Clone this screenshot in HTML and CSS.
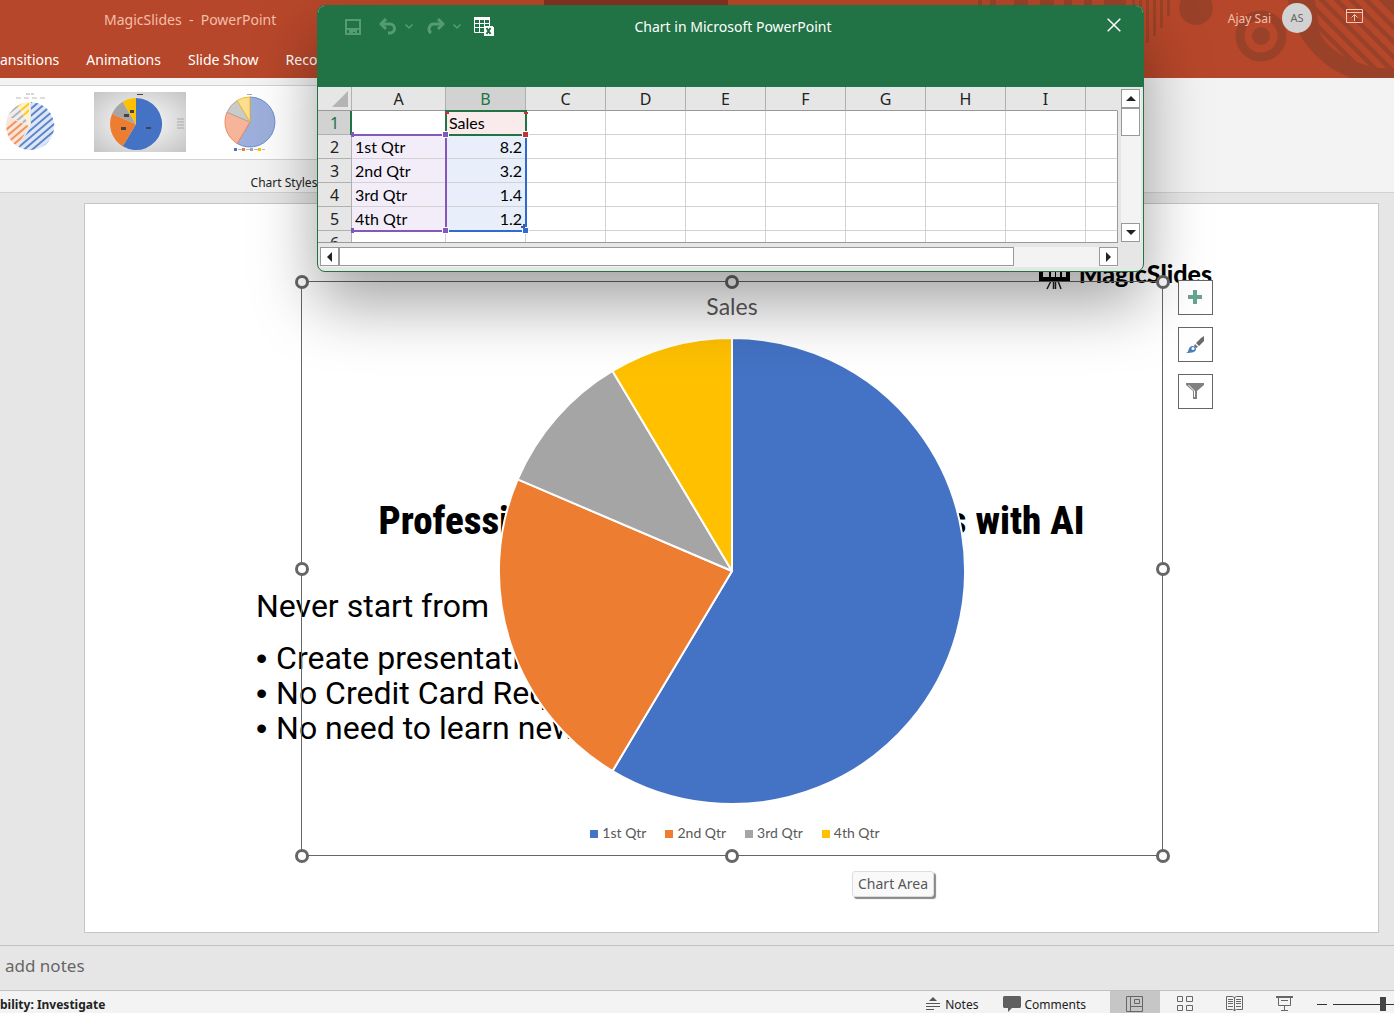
FILE: index.html
```
<!DOCTYPE html>
<html lang="en">
<head>
    <meta charset="UTF-8">
    <meta name="viewport" content="width=device-width, initial-scale=1.0">
    <title>MagicSlides - PowerPoint</title>
    <link rel="stylesheet" href="styles.css">
</head>
<body>

<div class="app">
    <header class="app-header">
        <svg class="header-art" width="850" height="78" viewBox="0 0 850 78">
            <path fill="#85321f" d="M0 0h184v6H0z"/>
            <g fill="#9a4229">
                <path d="M434 0h4v6h-4zM446 0h6v6h-6zM470 0h14v6h-14zM496 0h14v6h-14zM520 0h8v6h-8zM540 0h8v6h-8zM560 0h22v6h-22zM588 0h3v52h-3zM595 0h3v48h-3zM602 0h3v43h-3zM609 0h3v36h-3zM616 0h3v28h-3zM623 0h3v16h-3z"/>
                <circle cx="652" cy="8" r="17"/>
                <circle cx="717" cy="36" r="9"/>
                <circle cx="841" cy="-14" r="98"/>
            </g>
            <circle cx="717" cy="36" r="21" fill="none" stroke="#9a4229" stroke-width="9"/>
            <clipPath id="ring"><path d="M771 0h79v68h-18Q790 58 776 34Z"/></clipPath>
            <g clip-path="url(#ring)" stroke="#b7472a" stroke-width="6">
                <path d="M730 -10l90 90M745 -10l90 90M760 -10l90 90M775 -10l90 90M790 -10l90 90M805 -10l90 90M820 -10l90 90"/>
            </g>
        </svg>
        <div class="title-row">
            <span class="app-title">MagicSlides &nbsp;-&nbsp; PowerPoint</span>
            <div class="account">
                <span>Ajay Sai</span>
                <span class="avatar">AS</span>
                <button class="icon-button" aria-label="Ribbon Display Options">
                    <svg width="18" height="16" viewBox="0 0 18 16" fill="none" stroke="#f6c7b5"><path d="M.5 .5h16v13H.5zM.5 3.5h16M8.500 12V6M5.500 8.500l3-3 3 3"/></svg>
                </button>
            </div>
        </div>
        <nav class="tabs">
            <a href="#">ansitions</a>
            <a href="#">Animations</a>
            <a href="#">Slide Show</a>
            <a href="#">Record</a>
        </nav>
    </header>

    <section class="ribbon">
        <div class="ribbon-group">
            <div class="gallery">
                <div class="thumbs">
                    <button class="thumb" aria-label="Style 1">
                        <svg width="92" height="60" viewBox="-46 -34 92 60">
                            <defs>
                                <clipPath id="disc"><circle r="24"/></clipPath>
                            </defs>
                            <path fill="#dde6f5" d="M0 0V-24A24 24 0 1 1 -12.300 20.600Z"/>
                            <path fill="#fbe5d9" d="M0 0L-12.300 20.600A24 24 0 0 1 -22.100 -9.400Z"/>
                            <path fill="#eee" d="M0 0L-22.100 -9.400A24 24 0 0 1 -12.300 -20.600Z"/>
                            <path fill="#fff2cc" d="M0 0L-12.300 -20.600A24 24 0 0 1 0 -24Z"/>
                            <clipPath id="s1"><path d="M1 0V-24A24 24 0 1 1 -11.300 21Z"/></clipPath>
                            <clipPath id="s2"><path d="M-1 0L-12.300 20.600A24 24 0 0 1 -22.100 -8.400Z"/></clipPath>
                            <clipPath id="s3"><path d="M-1 -1L-22.100 -9.400A24 24 0 0 1 -12.300 -20.600Z"/></clipPath>
                            <clipPath id="s4"><path d="M-1 -2L-12.300 -20.600A24 24 0 0 1 -1 -24Z"/></clipPath>
                            <g stroke-width="2">
                                <path clip-path="url(#s1)" stroke="#5b84cd" d="M-30 -12l40-34M-30 -5l40-34M-30 2l50-42M-30 9l60-51M-30 16l60-51M-30 23l60-51M-30 30l60-51M-30 37l60-51M-30 44l60-51M-30 51l60-51M-30 58l60-51"/>
                                <path clip-path="url(#s2)" stroke="#f09560" d="M-30 9l60-51M-30 16l60-51M-30 23l60-51M-30 30l60-51M-30 37l60-51M-30 44l60-51"/>
                                <path clip-path="url(#s3)" stroke="#b5b5b5" d="M-30 2l50-42M-30 9l60-51M-30 16l60-51M-30 -5l40-34"/>
                                <path clip-path="url(#s4)" stroke="#ffc928" d="M-30 2l50-42M-30 9l60-51M-30 -5l40-34M-30 -12l40-34"/>
                            </g>
                            <path stroke="#aaa" stroke-dasharray="4 1" d="M-4 -32h8"/>
                            <path stroke="#bbb" stroke-dasharray="5 3" d="M-14 -28h29"/>
                        </svg>
                    </button>
                    <button class="thumb thumb-grey" aria-label="Style 2">
                        <svg width="92" height="60" viewBox="-42 -32 92 60">
                            <path fill="#4472c4" d="M0 0V-26A26 26 0 1 1 -13.300 22.300Z"/>
                            <path fill="#ed7d31" d="M0 0L-13.300 22.300A26 26 0 0 1 -23.900 -10.200Z"/>
                            <path fill="#a5a5a5" d="M0 0L-23.900 -10.200A26 26 0 0 1 -13.300 -22.300Z"/>
                            <path fill="#ffc000" d="M0 0L-13.300 -22.300A26 26 0 0 1 0 -26Z"/>
                            <path fill="#444" d="M10 3h5v2h-5zM-15 3h5v3h-5zM-12 -10h5v3h-5zM-6 -14h4v3h-4zM1 -30h6v1H1z"/>
                            <path stroke="#aaa" d="M41 -5h7M41 -2h7M41 1h7M41 4h7"/>
                        </svg>
                    </button>
                    <button class="thumb" aria-label="Style 3">
                        <svg width="92" height="60" viewBox="-46 -30 92 60">
                            <path fill="#9dafdc" stroke="#6d8fd2" d="M0 0V-25A25 25 0 1 1 -12.800 21.500Z"/>
                            <path fill="#f6b59a" stroke="#f08a55" d="M0 0L-12.800 21.500A25 25 0 0 1 -23 -9.800Z"/>
                            <path fill="#cacaca" stroke="#aaa" d="M0 0L-23 -9.800A25 25 0 0 1 -12.800 -21.500Z"/>
                            <path fill="#ffdf8f" stroke="#eebd2a" d="M0 0L-12.800 -21.500A25 25 0 0 1 0 -25Z"/>
                            <path stroke="#aaa" d="M-3 -27.500h5"/>
                            <path fill="#4472c4" d="M-16 26h3v3h-3z"/><path fill="#ed7d31" d="M-8 26h3v3h-3z"/><path fill="#a5a5a5" d="M0 26h3v3H0z"/><path fill="#ffc000" d="M8 26h3v3H8z"/>
                            <path stroke="#bbb" stroke-dasharray="4 4" d="M-12 27.500h27"/>
                        </svg>
                    </button>
                </div>
            </div>
            <div class="group-label">Chart Styles</div>
        </div>
    </section>

    <main class="workspace">
        <div class="slide">
            <div class="brand">
                <svg width="32" height="34" viewBox="0 0 32 34"><path fill="#000" d="M0 6h31v19H0z"/><path fill="#fff" d="M4 9h6v12H4zM12 9h4v12h-4zM17 9h4v12h-4zM23 9h4v12h-4z"/><path stroke="#222" stroke-width="1.500" d="M12 25l-4 8M14.500 25v8M16.500 25v8M19 25l3 8"/></svg>
                <span>MagicSlides</span>
            </div>
            <h1 class="slide-title">Professional Presentation in Seconds with AI</h1>
            <div class="slide-text">
                <p>Never start from</p>
                <ul>
                    <li>Create presentations</li>
                    <li>No Credit Card Required</li>
                    <li>No need to learn new</li>
                </ul>
            </div>

            <div class="chart">
                <span class="handle top left"></span>
                <span class="handle top center"></span>
                <span class="handle top right"></span>
                <span class="handle middle left"></span>
                <span class="handle middle right"></span>
                <span class="handle bottom left"></span>
                <span class="handle bottom center"></span>
                <span class="handle bottom right"></span>
                <h2 class="chart-title">Sales</h2>
                <svg class="pie" width="468" height="468" viewBox="-234 -234 468 468">
                    <g stroke="#fff" stroke-width="2" stroke-linejoin="round">
                        <path fill="#4472c4" d="M0 0V-233A233 233 0 1 1 -119.500 200Z"/>
                        <path fill="#ed7d31" d="M0 0L-119.500 200A233 233 0 0 1 -214.300 -91.600Z"/>
                        <path fill="#a5a5a5" d="M0 0L-214.300 -91.600A233 233 0 0 1 -119.500 -200Z"/>
                        <path fill="#ffc000" d="M0 0L-119.500 -200A233 233 0 0 1 0 -233Z"/>
                    </g>
                </svg>
                <ul class="legend">
                    <li class="blue">1st Qtr</li>
                    <li class="orange">2nd Qtr</li>
                    <li class="grey">3rd Qtr</li>
                    <li class="yellow">4th Qtr</li>
                </ul>
            </div>

            <div class="chart-tools">
                <button aria-label="Chart Elements">
                    <svg width="20" height="20" viewBox="0 0 20 20"><path fill="#67a58f" d="M7 2h4v5h5v4h-5v5H7v-5H2V7h5z"/></svg>
                </button>
                <button aria-label="Chart Styles">
                    <svg width="20" height="20" viewBox="0 0 20 20"><path fill="#6a6a6a" d="M18 1v5l-5 5-3-3 5-5zM9 9l3 3-2 1-2-2z"/><path fill="#4a7ebb" d="M0 18c3-1 2-4 4-6 2-2 6-1 6 2 0 3-4 4-10 4z"/><circle cx="7" cy="13.500" r="1.500" fill="#fff"/></svg>
                </button>
                <button aria-label="Chart Filters">
                    <svg width="20" height="20" viewBox="0 0 20 20"><path fill="#808080" d="M0 1h18v2l-7 6v8H7V9L0 3z"/><path fill="none" stroke="#fff" d="M2.500 3l6 6v6"/></svg>
                </button>
            </div>
            <div class="tooltip">Chart Area</div>
        </div>
    </main>

    <section class="notes-pane">add notes</section>

    <footer class="status-bar">
        <div class="status-left">bility: Investigate</div>
        <div class="status-right">
            <button class="notes-button">
                <svg width="14" height="14" viewBox="0 0 14 14"><path fill="#555" d="M3 4l4-4 4 4z"/><path stroke="#555" d="M0 6.500h14M0 9.500h14M0 12.500h8"/></svg>
                Notes
            </button>
            <button class="comments-button">
                <svg width="18" height="16" viewBox="0 0 18 16"><path fill="#606060" d="M1 0h16l1 1v10l-1 1H9l-4 4v-4H1l-1-1V1z"/></svg>
                Comments
            </button>
            <button class="view active" aria-label="Normal">
                <svg width="18" height="16" viewBox="0 0 18 16" fill="none" stroke="#666"><path d="M.5 .5h16v15H.5zM4.500 .5v15M4.500 10.500h12M8.500 3.500h5v4h-5z"/></svg>
            </button>
            <button class="view" aria-label="Slide Sorter">
                <svg width="18" height="16" viewBox="0 0 18 16" fill="none" stroke="#666"><path d="M1.500 .5h5v5h-5zM10.500 .5h6v5h-6zM1.500 9.500h5v5h-5zM10.500 9.500h6v5h-6z"/></svg>
            </button>
            <button class="view" aria-label="Reading View">
                <svg width="18" height="16" viewBox="0 0 18 16" fill="none" stroke="#666"><path d="M.5 .5h6l2 1 2-1h6v13h-6l-2 1-2-1h-6zM8.500 1v14M2 3.500h5M2 5.500h5M2 7.500h5M2 10.500h5M10 3.500h5M10 5.500h5M10 7.500h5M10 10.500h5"/></svg>
            </button>
            <button class="view" aria-label="Slide Show">
                <svg width="18" height="16" viewBox="0 0 18 16" fill="none" stroke="#666"><path d="M0 1h17" stroke-width="2"/><path d="M2.500 1v8.500h12V1M5 4.500h7M8.500 10v5M5 14.500h7"/></svg>
            </button>
            <button class="zoom-out" aria-label="Zoom Out"></button>
            <div class="zoom-slider"><input type="range" min="0" max="100" value="50" aria-label="Zoom"></div>
        </div>
    </footer>
</div>

<!-- Floating datasheet window -->
<div class="sheet-window">
    <div class="sheet-bar">
        <div class="quick-access">
            <button class="save" aria-label="Save"><svg width="16" height="16" viewBox="0 0 16 16"><path fill="none" stroke="#559b75" stroke-width="2" d="M1 1h14v14H1z"/><path fill="#559b75" d="M1 9h14v2H1zM4 11h8v4h-2v-2H8v2H4z"/></svg></button>
            <button class="undo" aria-label="Undo"><svg width="19" height="17" viewBox="0 0 19 17" fill="none" stroke="#559b75" stroke-width="3"><path d="M2 6h9a4 4 0 0 1 0 9H9"/><path d="M7 1L2 6l5 5"/></svg></button>
            <button class="chevron" aria-label="Undo list"><svg width="8" height="5" viewBox="0 0 8 5" fill="none" stroke="#559b75" stroke-width="1.500"><path d="M.5 .5L4 4 7.500 .5"/></svg></button>
            <button class="redo" aria-label="Redo"><svg width="19" height="17" viewBox="0 0 19 17" fill="none" stroke="#559b75" stroke-width="3"><path d="M17 6H8a5 5 0 0 0-3 9"/><path d="M12 1l5 5-5 5"/></svg></button>
            <button class="chevron" aria-label="Redo list"><svg width="8" height="5" viewBox="0 0 8 5" fill="none" stroke="#559b75" stroke-width="1.500"><path d="M.5 .5L4 4 7.500 .5"/></svg></button>
            <button class="edit" aria-label="Edit Data in Excel"><svg width="20" height="20" viewBox="0 0 20 20"><path fill="#fff" d="M0 0h16v3H0z"/><path fill="none" stroke="#fff" d="M.5 3v12.500H10M5.500 3v12M10.500 3v6M15.500 3v6M0 6.500h16M0 10.500h10"/><path fill="#fff" d="M10 9h9v1h1v9h-10z"/><path stroke="#217346" stroke-width="2" d="M12.500 11l4 6M16.500 11l-4 6"/></svg></button>
        </div>
        <div class="sheet-title">Chart in Microsoft PowerPoint</div>
        <button class="close" aria-label="Close"><svg width="14" height="14" viewBox="0 0 14 14" stroke="#fff" stroke-width="1.500"><path d="M.7 .7l12.600 12.600M13.300 .7L.7 13.300"/></svg></button>
    </div>
    <div class="sheet-body">
        <div class="sheet">
            <table>
                <thead>
                    <tr><th class="corner"></th><th class="col-a">A</th><th class="selected">B</th><th>C</th><th>D</th><th>E</th><th>F</th><th>G</th><th>H</th><th>I</th><th class="rest"></th></tr>
                </thead>
                <tbody>
                    <tr><th class="selected">1</th><td></td><td class="series">Sales</td><td></td><td></td><td></td><td></td><td></td><td></td><td></td><td></td></tr>
                    <tr><th>2</th><td class="category">1st Qtr</td><td class="value">8.2</td><td></td><td></td><td></td><td></td><td></td><td></td><td></td><td></td></tr>
                    <tr><th>3</th><td class="category">2nd Qtr</td><td class="value">3.2</td><td></td><td></td><td></td><td></td><td></td><td></td><td></td><td></td></tr>
                    <tr><th>4</th><td class="category">3rd Qtr</td><td class="value">1.4</td><td></td><td></td><td></td><td></td><td></td><td></td><td></td><td></td></tr>
                    <tr><th>5</th><td class="category">4th Qtr</td><td class="value">1.2</td><td></td><td></td><td></td><td></td><td></td><td></td><td></td><td></td></tr>
                    <tr><th>6</th><td></td><td></td><td></td><td></td><td></td><td></td><td></td><td></td><td></td><td></td></tr>
                </tbody>
            </table>
            <svg class="ranges" width="212" height="156" viewBox="0 0 212 156">
                <path fill="#b4b4b4" d="M30 4v16H14z"/>
                <g fill="none" stroke-width="2">
                    <path stroke="#217346" d="M33 24v24"/>
                    <path stroke="#8457bb" d="M34 48h94v96H34"/>
                    <path stroke="#2f6ace" d="M128 144h80V48"/>
                    <path stroke="#217346" d="M128 24h80v24h-80z"/>
                </g>
                <g stroke="#fff">
                    <path fill="#8457bb" d="M124.500 44.500h6v6h-6zM124.500 140.500h6v6h-6z"/>
                    <path fill="#c5313b" d="M204.500 44.500h6v6h-6z"/>
                    <path fill="#2f6ace" d="M204.500 140.500h6v6h-6z"/>
                </g>
                <path fill="#8457bb" d="M33 45h3v5h-3zM33 141h3v5h-3z"/>
                <path fill="#c5313b" d="M127 25h4v2h-4zM206 25h4v2h-4z"/>
                <path fill="#4158b0" d="M205 137h2v4h-4v-2h2z"/>
            </svg>
        </div>
        <div class="vscroll">
            <button aria-label="Scroll up"><svg width="10" height="6" viewBox="0 0 10 6"><path fill="#222" d="M0 5l5-5 5 5z"/></svg></button>
            <div class="vthumb"></div>
            <button class="last" aria-label="Scroll down"><svg width="10" height="6" viewBox="0 0 10 6"><path fill="#222" d="M0 0l5 5 5-5z"/></svg></button>
        </div>
        <div class="hscroll">
            <button aria-label="Scroll left"><svg width="6" height="10" viewBox="0 0 6 10"><path fill="#222" d="M5 0L0 5l5 5z"/></svg></button>
            <div class="hthumb"></div>
            <button class="last" aria-label="Scroll right"><svg width="6" height="10" viewBox="0 0 6 10"><path fill="#222" d="M0 0l5 5-5 5z"/></svg></button>
        </div>
    </div>
</div>

</body>
</html>
```
FILE: styles.css
```
* {
    box-sizing: border-box;
}
body {
    margin: 0;
    font-family: 'Noto Sans', 'Open Sans', sans-serif;
    font-size: 14px;
    color: #222;
    overflow: hidden;
}
button {
    display: flex;
    align-items: center;
    justify-content: center;
    padding: 0;
    border: none;
    background: none;
    font: inherit;
    color: inherit;
}
h1, h2, p, ul {
    margin: 0;
    padding: 0;
    list-style: none;
}
svg {
    display: block;
    flex: none;
}
.app {
    display: flex;
    flex-direction: column;
    height: 100vh;
}

/* Title bar and tabs */
.app-header {
    position: relative;
    height: 78px;
    background-color: #b7472a;
    color: #fff;
}
.header-art {
    position: absolute;
    top: 0;
    right: 0;
}
.title-row {
    position: relative;
    display: flex;
    justify-content: space-between;
    align-items: center;
    height: 38px;
    padding: 0 30px 0 104px;
    color: #f4bfab;
}
.account {
    display: flex;
    align-items: center;
    padding-bottom: 2px;
    font-size: 12px;
}
.avatar {
    width: 30px;
    height: 30px;
    margin: 0 34px 0 11px;
    border-radius: 50%;
    background-color: #d2d2d2;
    color: #666;
    font-size: 11px;
    line-height: 30px;
    text-align: center;
}
.icon-button {
    padding-bottom: 2px;
}
.tabs {
    display: flex;
    gap: 27px;
    height: 40px;
    line-height: 43px;
}
.tabs a {
    color: #fff;
    text-decoration: none;
}

/* Ribbon */
.ribbon {
    height: 115px;
    padding-top: 7px;
    background-color: #f3f3f3;
    border-bottom: 1px solid #d2d2d2;
}
.ribbon-group {
    width: 568px;
}
.gallery {
    height: 75px;
    padding-top: 6px;
    background-color: #fff;
    border: 1px solid #d2d2d2;
    border-left: none;
}
.thumbs {
    display: flex;
    justify-content: flex-end;
    gap: 18px;
    width: 296px;
    overflow: hidden;
}
.thumb-grey {
    background: radial-gradient(#fff, #c4c4c4);
}
.group-label {
    font-size: 12px;
    line-height: 45px;
    text-align: center;
}

/* Slide */
.workspace {
    flex: 1;
    display: flex;
    padding: 10px 15px 12px 84px;
    background-color: #e6e6e6;
}
.slide {
    position: relative;
    flex: 1;
    background-color: #fff;
    border: 1px solid #c6c6c6;
}
.brand {
    position: absolute;
    top: 52px;
    right: 166px;
    display: flex;
    align-items: center;
    gap: 8px;
    color: #000;
    font-family: Lato, sans-serif;
    font-size: 25px;
    font-weight: 900;
}
.slide-title {
    padding-top: 293px;
    color: #000;
    font-family: 'Roboto Condensed', 'Liberation Sans Narrow', sans-serif;
    font-size: 39px;
    font-weight: 800;
    line-height: 48px;
    text-align: center;
}
.slide-text {
    padding: 44px 0 0 171px;
    color: #000;
    font-family: Roboto, sans-serif;
    font-size: 32px;
    line-height: 35px;
}
.slide-text p {
    padding-bottom: 17px;
}
.slide-text li::before {
    content: '• ';
    font-family: 'Liberation Sans', sans-serif;
}

/* Chart object */
.chart {
    position: absolute;
    top: 77px;
    left: 216px;
    display: flex;
    flex-direction: column;
    align-items: center;
    width: 862px;
    height: 575px;
    border: 1px solid #666;
    color: #595959;
    font-family: Lato, sans-serif;
}
.chart-title {
    font-size: 23px;
    font-weight: 400;
    line-height: 48px;
}
.pie {
    margin-top: 7px;
}
.legend {
    display: flex;
    gap: 19px;
    margin-top: 18px;
    padding-left: 6px;
    font-size: 14px;
    line-height: 20px;
}
.legend li::before {
    content: '';
    display: inline-block;
    width: 8px;
    height: 8px;
    margin-right: 4px;
    background-color: currentColor;
}
.legend .blue::before {
    background-color: #4472c4;
}
.legend .orange::before {
    background-color: #ed7d31;
}
.legend .grey::before {
    background-color: #a5a5a5;
}
.legend .yellow::before {
    background-color: #ffc000;
}
.handle {
    position: absolute;
    width: 14px;
    height: 14px;
    border: 3px solid #666;
    border-radius: 50%;
    background-color: #fff;
}
.handle.top {
    top: -7px;
}
.handle.middle {
    top: 280px;
}
.handle.bottom {
    bottom: -8px;
}
.handle.left {
    left: -7px;
}
.handle.center {
    left: 423px;
}
.handle.right {
    right: -8px;
}
.chart-tools {
    position: absolute;
    top: 76px;
    left: 1093px;
    display: flex;
    flex-direction: column;
    gap: 12px;
}
.chart-tools button {
    width: 35px;
    height: 35px;
    border: 1px solid #666;
    background-color: #fff;
}
.tooltip {
    position: absolute;
    top: 667px;
    left: 767px;
    padding: 0 5px;
    border: 1px solid #ddd;
    border-radius: 3px;
    background-color: #f9f9f9;
    box-shadow: 2px 2px 1px #888;
    color: #575757;
    font-size: 14px;
    line-height: 24px;
}

/* Notes and status bar */
.notes-pane {
    height: 45px;
    padding-left: 5px;
    background-color: #e6e6e6;
    border-top: 1px solid #c0c0c0;
    color: #666;
    font-size: 17px;
    line-height: 40px;
}
.status-bar {
    display: flex;
    justify-content: space-between;
    height: 23px;
    background-color: #f3f3f3;
    border-top: 1px solid #c0c0c0;
    font-size: 12px;
    line-height: 27px;
}
.status-left {
    font-weight: bold;
}
.status-right {
    display: flex;
    height: 26px;
}
.notes-button {
    gap: 5px;
    margin-right: 25px;
}
.comments-button {
    gap: 3px;
    margin-right: 24px;
}
.view {
    width: 50px;
}
.view.active {
    background-color: #c6c6c6;
}
.zoom-out {
    width: 23px;
}
.zoom-out::before {
    content: '';
    width: 10px;
    height: 1px;
    background-color: #333;
}
.zoom-slider {
    display: flex;
    align-items: center;
    width: 61px;
    overflow: hidden;
}
.zoom-slider input {
    flex: none;
    width: 100px;
    height: 14px;
    margin: 0;
    appearance: none;
    background: linear-gradient(#333, #333) center / 100% 1px no-repeat;
}
.zoom-slider input::-webkit-slider-thumb {
    appearance: none;
    width: 6px;
    height: 14px;
    background-color: #444;
}

/* Datasheet window */
.sheet-window {
    position: absolute;
    top: 5px;
    left: 317px;
    right: 250px;
    border: 1px solid #217346;
    border-radius: 8px;
    overflow: hidden;
    background-color: #e6e6e6;
    box-shadow: 0 32px 64px rgba(0, 0, 0, 0.36);
}
.sheet-bar {
    display: grid;
    grid-template-columns: 1fr auto 1fr;
    align-items: center;
    height: 81px;
    padding: 0 22px 40px 27px;
    background-color: #217346;
    color: #fff;
}
.quick-access {
    display: flex;
    align-items: center;
}
.undo {
    margin: 0 7px 0 18px;
}
.redo {
    margin: 0 8px 0 13px;
}
.edit {
    margin-left: 13px;
}
.close {
    justify-self: end;
    padding-bottom: 4px;
}
.sheet-body {
    display: grid;
    grid-template-columns: 1fr 20px;
    column-gap: 3px;
    padding: 0 2px 4px 0;
}
.sheet {
    position: relative;
    height: 156px;
    overflow: hidden;
    border-bottom: 1px solid #999;
}
.sheet table {
    width: 100%;
    table-layout: fixed;
    border-collapse: separate;
    border-spacing: 0;
    background-color: #fff;
}
.sheet th, .sheet td {
    width: 80px;
    height: 24px;
    padding: 0 3px;
    border-right: 1px solid #d2d2d2;
    border-bottom: 1px solid #d2d2d2;
    font-size: 16px;
    font-weight: 400;
    line-height: 20px;
}
.sheet td {
    color: #000;
    font-family: Lato, sans-serif;
}
.sheet td:last-child {
    border-right-color: #999;
}
.sheet th {
    background-color: #e6e6e6;
    border-color: #b0b0b0;
}
.sheet thead th {
    border-bottom-color: #999;
}
.sheet .corner {
    width: 34px;
}
.sheet .col-a {
    width: 94px;
}
.sheet .rest {
    width: auto;
    border-right-color: #e6e6e6;
}
.sheet .selected {
    background-color: #d2d2d2;
    color: #217346;
}
.sheet .series {
    background-color: #f9eaeb;
}
.sheet .category {
    background-color: #f2edf8;
}
.sheet .value {
    background-color: #e8effa;
    text-align: right;
}
.ranges {
    position: absolute;
    top: 0;
    left: 0;
}
.vscroll {
    display: flex;
    flex-direction: column;
    margin: 2px 0 1px;
    background-color: #f3f3f3;
}
.hscroll {
    display: flex;
    height: 20px;
    margin: 4px 0 0 2px;
    background-color: #f3f3f3;
}
.vscroll button, .hscroll button {
    width: 19px;
    height: 19px;
    border: 1px solid #999;
    background-color: #fff;
}
.vthumb {
    width: 19px;
    height: 28px;
    border: 1px solid #999;
    background-color: #fff;
}
.vscroll .last {
    margin-top: auto;
}
.hthumb {
    width: 675px;
    height: 19px;
    border: 1px solid #999;
    background-color: #fff;
}
.hscroll .last {
    margin-left: auto;
}
```
